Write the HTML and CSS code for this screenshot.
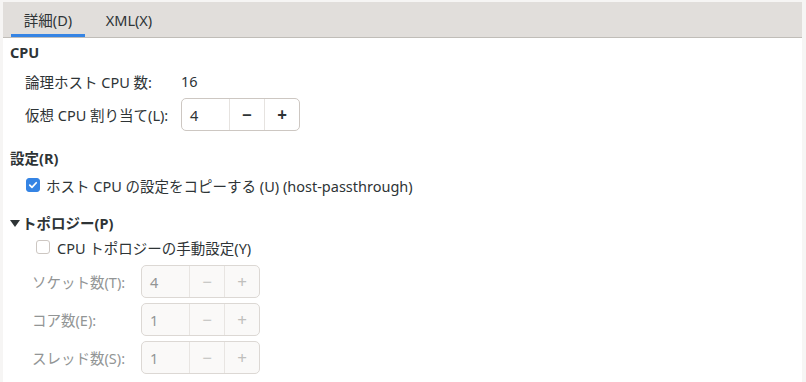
FILE: index.html
```html
<!DOCTYPE html>
<html lang="ja">
<head>
  <meta charset="UTF-8">
  <title>CPU</title>
  <link rel="stylesheet" href="styles.css">
</head>
<body>
<div class="pane">
  <div class="tabs">
    <div class="tab active">詳細(D)</div>
    <div class="tab">XML(X)</div>
  </div>
  <div class="content">
    <div class="sect-title first">CPU</div>
    <div class="grid">
      <div class="row info">
        <span class="label">論理ホスト CPU 数:</span>
        <span class="value">16</span>
      </div>
      <div class="row spin-row">
        <span class="label">仮想 CPU 割り当て(L):</span>
        <div class="spin">
          <span class="entry">4</span>
          <span class="btn">−</span>
          <span class="btn">+</span>
        </div>
      </div>
    </div>

    <div class="sect-title mode">設定(R)</div>
    <label class="check checked-row">
      <span class="box checked">
        <svg viewBox="0 0 14 14"><path d="M3.2 7.2l2.6 2.6 5-5.4" fill="none" stroke="#fff" stroke-width="2" stroke-linecap="round" stroke-linejoin="round"/></svg>
      </span>
      ホスト CPU の設定をコピーする (U) (host-passthrough)
    </label>

    <div class="sect-title topo"><span class="arrow"></span>トポロジー(P)</div>
    <label class="check manual">
      <span class="box"></span>
      CPU トポロジーの手動設定(Y)
    </label>
    <div class="topo-grid">
      <div class="row disabled">
        <span class="label">ソケット数(T):</span>
        <div class="spin">
          <span class="entry">4</span>
          <span class="btn">−</span>
          <span class="btn">+</span>
        </div>
      </div>
      <div class="row disabled">
        <span class="label">コア数(E):</span>
        <div class="spin">
          <span class="entry">1</span>
          <span class="btn">−</span>
          <span class="btn">+</span>
        </div>
      </div>
      <div class="row disabled">
        <span class="label">スレッド数(S):</span>
        <div class="spin">
          <span class="entry">1</span>
          <span class="btn">−</span>
          <span class="btn">+</span>
        </div>
      </div>
    </div>
  </div>
</div>
</body>
</html>
```

FILE: styles.css
```css
body {
  margin: 0;
  padding: 2px 4px 0 3px;
  background: #f6f5f4;
  font-family: "Noto Sans", "Noto Sans CJK JP", sans-serif;
  font-size: 14.5px;
  color: #2e3436;
  height: 380px;
  overflow: hidden;
}
.pane {
  background: #fff;
  height: 380px;
}
.tabs {
  display: flex;
  height: 35px;
  background: #e1dedb;
  border-bottom: 1px solid #c0bdb8;
  padding-left: 8px;
}
.tab {
  display: flex;
  align-items: center;
  padding: 0 12px;
  margin-right: 7px;
  box-sizing: border-box;
  border-bottom: 3px solid transparent;
  padding-top: 3px;
  min-width: 74px;
  justify-content: center;
}
.tab.active { border-bottom-color: #3584e4; }
.content { padding-left: 7px; }
.sect-title {
  font-weight: bold;
  height: 20px;
  line-height: 20px;
  display: flex;
  align-items: center;
}
.sect-title.first { margin-top: 4px; }
.sect-title.mode { margin-top: 17px; }
.sect-title.topo { margin-top: 18px; }
.arrow {
  width: 0;
  height: 0;
  border-left: 5px solid transparent;
  border-right: 5px solid transparent;
  border-top: 7px solid #2e3436;
  margin-right: 2px;
}
.grid { padding-left: 15px; }
.row {
  display: flex;
  align-items: center;
}
.grid .label { width: 156px; }
.row.info { margin-top: 9px; height: 20px; }
.row.spin-row { margin-top: 7px; }
.spin {
  display: flex;
  width: 119px;
  height: 33px;
  box-sizing: border-box;
  border: 1px solid #cdc7c2;
  border-radius: 5px;
  background: #fff;
}
.spin .entry {
  flex: 1;
  display: flex;
  align-items: center;
  padding-left: 8px;
}
.spin .btn {
  width: 34px;
  display: flex;
  align-items: center;
  justify-content: center;
  border-left: 1px solid #e6e3e0;
  font-size: 17px;
  font-weight: bold;
}
.check {
  display: flex;
  align-items: center;
  height: 20px;
}
.checked-row { margin-top: 7px; padding-left: 16px; }
.manual { margin-top: 4px; padding-left: 26px; }
.box {
  width: 14px;
  height: 14px;
  box-sizing: border-box;
  border: 1px solid #cdc7c2;
  border-radius: 3px;
  background: #fff;
  margin-right: 6px;
  display: flex;
}
.manual .box { margin-right: 7px; }
.box.checked {
  background: #3584e4;
  border-color: #3584e4;
}
.box svg { width: 12px; height: 12px; }
.topo-grid {
  margin-top: 8px;
  padding-left: 22px;
  display: flex;
  flex-direction: column;
  gap: 5px;
}
.topo-grid .label { width: 109px; }
.row.disabled { color: #929595; }
.row.disabled .spin {
  background: #faf9f8;
  border-color: #dcd8d4;
}
.row.disabled .btn {
  border-left-color: #e8e5e2;
  font-weight: normal;
  color: #c0bfbc;
}
```
